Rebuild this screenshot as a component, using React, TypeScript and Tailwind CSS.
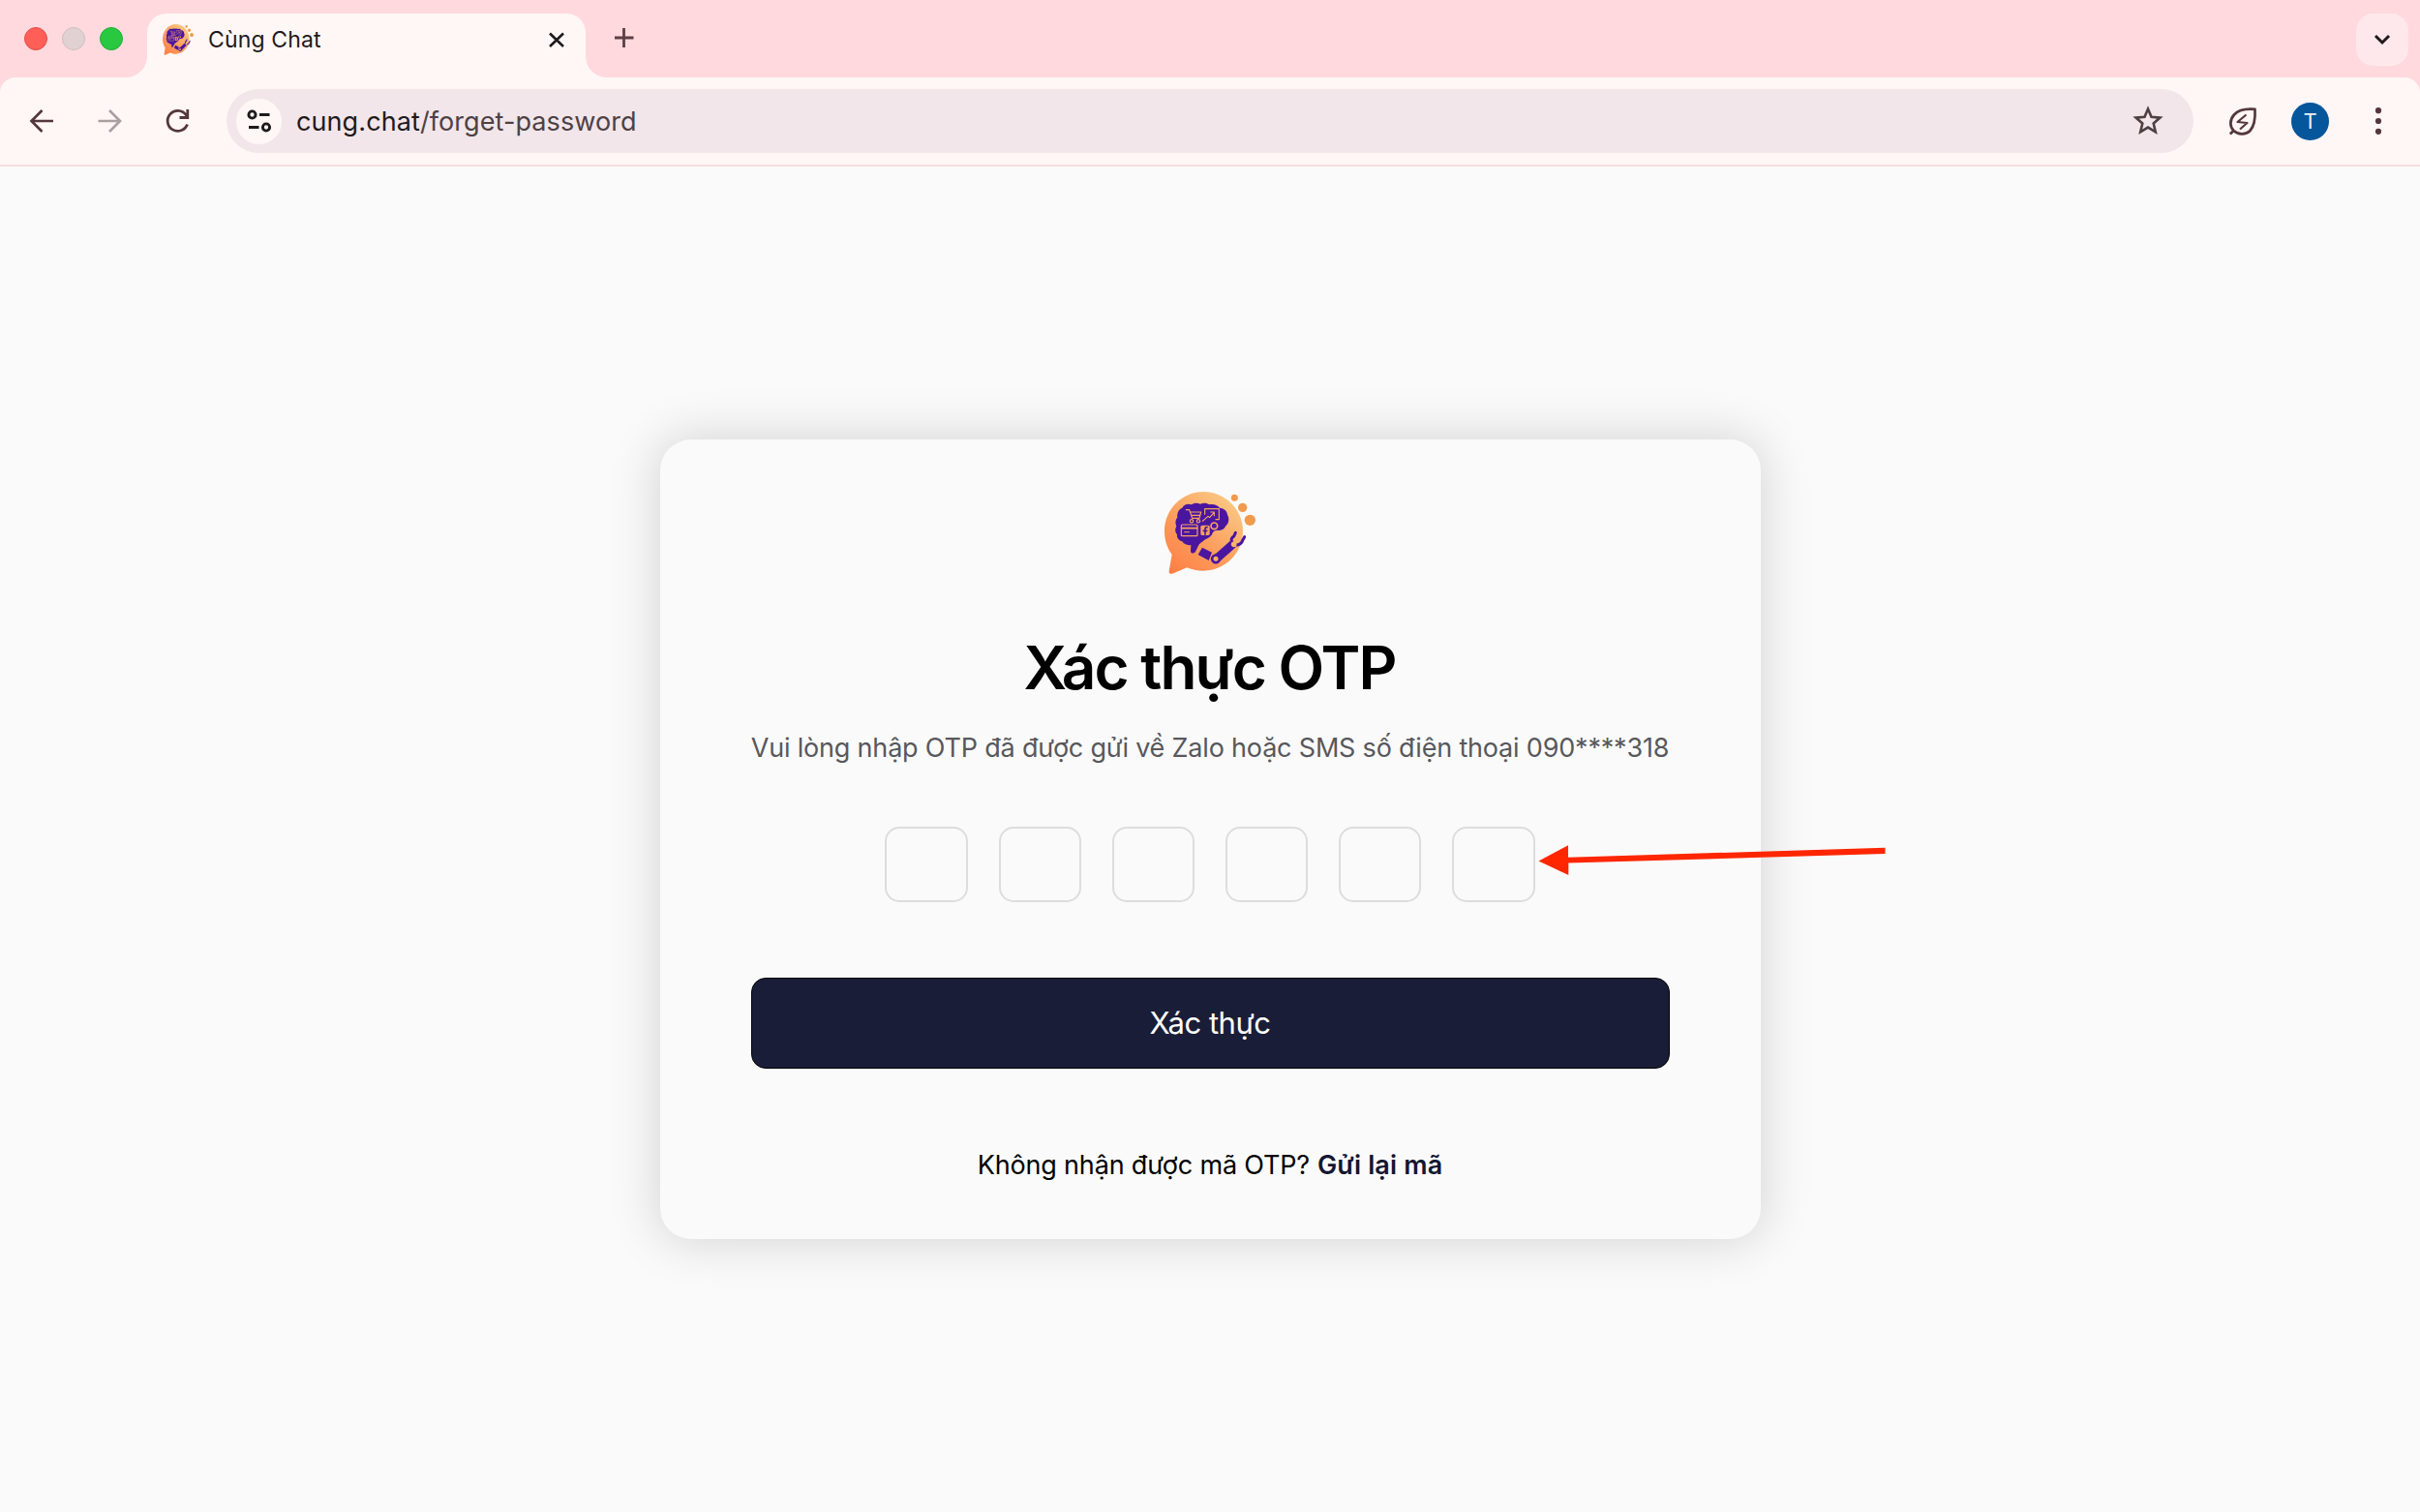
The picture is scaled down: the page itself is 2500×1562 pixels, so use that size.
import { useId } from "react";

/** Speech bubble with a brain and a robot arm. */
function Logo({ className, viewBox = "0 0 420 360" }: { className: string; viewBox?: string }) {
  const id = useId();
  return (
    <svg className={className} viewBox={viewBox} preserveAspectRatio="none" fill="none">
      <defs>
        <linearGradient id={id} x1="85" y1="300" x2="270" y2="75" gradientUnits="userSpaceOnUse">
          <stop offset="0" stopColor="#ff7f45" />
          <stop offset="0.45" stopColor="#fb9c5c" />
          <stop offset="1" stopColor="#fac782" />
        </linearGradient>
      </defs>
      <path
        d="M190 54C257 54 312 109 312 176S257 299 190 299C171 299 155 296 139 289L93 308C87 310 82 306 83 300L92 248C77 228 69 203 69 176C69 109 123 54 190 54Z"
        fill={`url(#${id})`}
      />
      <circle cx="286" cy="73" r="10.500" fill="#f29a4c" />
      <circle cx="311" cy="103" r="14" fill="#f29a4c" />
      <circle cx="334" cy="142" r="17" fill="#f29a4c" />
      <path
        d="M124 104C128 93 143 90 152 94C160 88 172 88 180 92C190 87 202 89 208 94C220 90 234 96 240 104C254 105 263 114 264 125C271 138 268 152 259 160C254 171 243 176 234 173C228 173 222 175 219 180C215 192 205 199 195 202C188 208 181 212 175 219L166 238C163 246 150 248 150 238L151 219C140 221 129 217 124 208C113 206 106 196 108 187C101 179 101 168 106 161C101 149 104 138 109 134C107 120 113 108 124 104Z"
        fill="#4a169f"
      />
      <g stroke="#f6a263" strokeWidth="3.500" strokeLinecap="round" strokeLinejoin="round">
        <path d="M136 110H146L155 136H177L182 117H149M153 127H179" />
        <circle cx="153" cy="145" r="5" />
        <circle cx="174" cy="145" r="5" />
        <path d="M194 124V107H238V140H228M187 145L204 130L209 134L222 119M212 117H223V128" />
        <rect x="121" y="156" width="50" height="35" rx="3" />
        <path d="M122 167H170" strokeWidth="5" />
        <path d="M131 179H145" strokeWidth="3" />
        <circle cx="223" cy="160" r="10" strokeWidth="5" />
      </g>
      <rect x="181" y="158" width="28" height="31" rx="5" fill="#f79f60" />
      <path d="M203 164H200C197 164 195 166 195 169V188M188 175H202" stroke="#4a169f" strokeWidth="5" />
      <path d="M186 227L216 242L206 267L173 249Z" fill="#4a169f" />
      <path d="M221 252L272 207L290 226L240 270Z" fill="#4a169f" />
      <path
        d="M285 218C273 208 274 198 284 192L289 181M285 218C300 222 310 212 311 205L317 194"
        stroke="#4a169f"
        strokeWidth="9"
        strokeLinecap="round"
      />
      <circle cx="228" cy="262" r="15.500" fill="#4a169f" />
      <circle cx="228" cy="262" r="7.500" fill="#f9ad6b" />
      <circle cx="284" cy="217" r="8.500" fill="#f9b26f" />
    </svg>
  );
}

function TabStrip() {
  return (
    <div className="flex h-20 items-end">
      <div className="flex w-[130px] items-center gap-[15px] self-center pl-[25px]">
        <span className="size-6 shrink-0 rounded-full border border-[#dd4f4b] bg-[#ff5f57]" />
        <span className="size-6 shrink-0 rounded-full border border-[#cdbfc1] bg-[#e2d1d3]" />
        <span className="size-6 shrink-0 rounded-full border border-[#22ae38] bg-[#28c840]" />
      </div>
      <span className="size-[22px] bg-[radial-gradient(circle_at_0_0,transparent_21.500px,#fff7f6_22.500px)]" />
      <div className="flex h-[66px] w-[453px] items-start rounded-t-[20px] bg-[#fff7f6] pl-4 pr-[21px] pt-[11px]">
        <Logo className="h-8 w-8 shrink-0" viewBox="69 54 282 256" />
        <span className="ml-[15px] mt-px flex-1 text-[23px] leading-[30px] tracking-[0.14px] text-[#1f1a1b]">
          Cùng Chat
        </span>
        <svg className="mt-[6px] size-5" viewBox="0 0 20 20" stroke="#1f1a1b" strokeWidth="2.600" fill="none">
          <path d="M4 3.500L18 17M18 3.500L4 17" />
        </svg>
      </div>
      <span className="size-[22px] bg-[radial-gradient(circle_at_100%_0,transparent_21.500px,#fff7f6_22.500px)]" />
      <svg className="mb-[29px] ml-[6px] size-[24px]" viewBox="0 0 24 24" stroke="#5b3f44" strokeWidth="2.800" fill="none">
        <path d="M11.500 2V22M2 12H21.500" />
      </svg>
      <div className="mb-3 ml-auto mr-3 flex size-[54px] items-center justify-center rounded-[18px] bg-[#ffe8eb]">
        <svg className="size-6" viewBox="0 0 24 24" stroke="#1f1a1b" strokeWidth="3" fill="none">
          <path d="M5 8L12 15L19 8" />
        </svg>
      </div>
    </div>
  );
}

function Toolbar() {
  return (
    <div className="flex h-[92px] items-center rounded-t-[16px] border-b-2 border-[#f5dde0] bg-[#fff7f6] pl-7">
      <svg className="size-[30px]" viewBox="0 0 30 30" stroke="#54373c" strokeWidth="2.700" fill="none">
        <path d="M27 15H5M15.500 4L4.500 15L15.500 26" />
      </svg>
      <svg className="ml-10 size-[30px]" viewBox="0 0 30 30" stroke="#aba0a1" strokeWidth="2.700" fill="none">
        <path d="M3.500 15H25M15 4L26 15L15 26" />
      </svg>
      <svg className="ml-10 size-[32px]" viewBox="0 0 32 32" stroke="#54373c" strokeWidth="2.800" fill="none">
        <path d="M25.500 19.500A10.500 10.500 0 1 1 24 9.500L26 12M25.800 4V12.500H17.500" />
      </svg>
      <div className="ml-[34px] flex h-[66px] w-[2032px] items-center rounded-full bg-[#f2e6ea] pl-[10px] pr-[31px]">
        <div className="flex size-[47px] items-center justify-center rounded-full bg-[#fff7f6]">
          <svg className="size-[30px]" viewBox="0 0 30 30" stroke="#1f1a1b" strokeWidth="2.900" fill="none">
            <circle cx="7.500" cy="8.500" r="3.600" />
            <path d="M15 8.500H25.500M4 21.500H14.500" />
            <circle cx="22" cy="21.500" r="3.600" />
          </svg>
        </div>
        <span className="ml-[15px] mt-px flex-1 text-[27px] leading-10 tracking-[0.09px] text-[#4d4144]">
          <span className="text-[#1f1a1b]">cung.chat</span>/forget-password
        </span>
        <svg className="mb-px size-8" viewBox="0 0 32 32" stroke="#4d3f42" strokeWidth="2.600" fill="none">
          <path d="M16 3.500L19.500 11.800L28.500 12.600L21.700 18.500L23.800 27.300L16 22.600L8.200 27.300L10.300 18.500L3.500 12.600L12.500 11.800Z" />
        </svg>
      </div>
      <svg
        className="ml-[35px] size-8"
        viewBox="0 0 32 32"
        stroke="#54373c"
        strokeWidth="2.700"
        fill="none"
        strokeLinejoin="round"
      >
        <path d="M28.500 3.800C19 3 11 5 7 9.500C2 15 2.500 22 6.500 26C11 30 18.500 31 23.500 26C28 21 29 13 28.500 3.800ZM2.800 29.500L7 25.500" />
        <path d="M19.500 9.500L10.500 17L20.500 18L13 24.500" strokeWidth="2.200" />
      </svg>
      <div className="ml-[34px] flex size-[39px] items-center justify-center rounded-full bg-[#05569b] text-[22px] leading-none text-[#e8f0f7]">
        T
      </div>
      <svg className="ml-[42px] size-[30px]" viewBox="0 0 30 30" fill="#54373c">
        <circle cx="9" cy="4.200" r="3.100" />
        <circle cx="9" cy="15" r="3.100" />
        <circle cx="9" cy="25.800" r="3.100" />
      </svg>
    </div>
  );
}

function OtpCard() {
  return (
    <div className="mx-auto mt-[282px] flex h-[826px] w-[1137px] flex-col items-center rounded-[32px] bg-[#fafafa] px-[94px] pt-9 shadow-[0_0_50px_4px_rgba(0,0,0,0.145)]">
      <Logo className="h-[120px] w-[140px] shrink-0" />
      <h1 className="mt-10 whitespace-nowrap pr-px text-[62px] font-semibold leading-[80px] tracking-[-1.900px] text-black">
        Xác thực OTP
      </h1>
      <p className="mt-[23px] whitespace-nowrap text-[27px] leading-10 tracking-[-0.188px] text-[#58585c]">
        Vui lòng nhập OTP đã được gửi về Zalo hoặc SMS số điện thoại 090****318
      </p>
      <div className="relative mt-[61px] flex gap-8">
        {[0, 1, 2, 3, 4, 5].map((i) => (
          <input
            key={i}
            maxLength={1}
            className="h-[78px] w-[85.200px] rounded-[15px] border-2 border-[#dddddd] bg-transparent text-center text-[32px] outline-none"
          />
        ))}
        <svg className="absolute left-full top-[10px] ml-[2px] h-12 w-[364px]" viewBox="0 0 364 48" fill="#ff2600">
          <path d="M1.500 25.500L32 9.300V21.700L359.500 11.800V18L32.300 27.600V40Z" />
        </svg>
      </div>
      <button className="mt-[78px] h-[94px] w-full shrink-0 rounded-[15px] border border-black bg-[#1a1d37] text-[31px] leading-10 tracking-[-0.480px] text-white">
        Xác thực
      </button>
      <p className="mt-20 flex gap-2 whitespace-nowrap text-[27px] leading-10 tracking-[-0.170px] text-black">
        Không nhận được mã OTP?
        <a className="font-semibold tracking-[0.150px] text-[#141633]">Gửi lại mã</a>
      </p>
    </div>
  );
}

export default function App() {
  return (
    <div className="flex h-[1562px] w-[2500px] flex-col overflow-hidden bg-[#ffd9de] font-['Inter',sans-serif]">
      <TabStrip />
      <Toolbar />
      <main className="flex-1 bg-[#fafafa]">
        <div className="flex">
          <OtpCard />
        </div>
      </main>
    </div>
  );
}
